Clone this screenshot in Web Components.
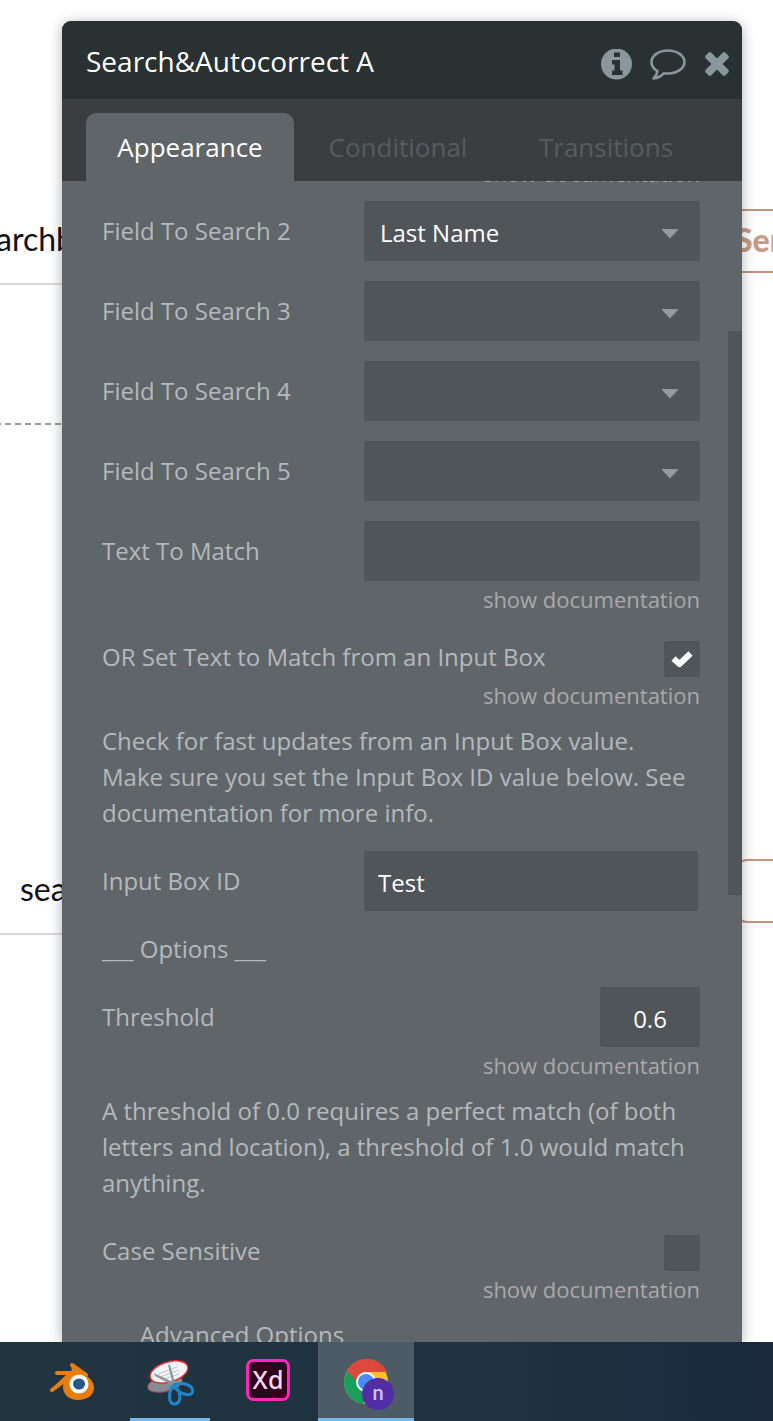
<!DOCTYPE html>
<html lang="en">
<head>
<meta charset="utf-8">
<meta name="viewport" content="width=device-width, initial-scale=1">
<title>Search&amp;Autocorrect A</title>
<style>
    body {
        margin: 0;
        background: #ffffff;
        font-family: "Open Sans", "Noto Sans", sans-serif;
    }
</style>
</head>
<body>
<editor-desktop>
    <page-canvas slot="canvas"></page-canvas>

    <property-editor heading="Search&amp;Autocorrect A">
        <doc-link></doc-link>
        <select-field label="Field To Search 2" value="Last Name"></select-field>
        <select-field label="Field To Search 3"></select-field>
        <select-field label="Field To Search 4"></select-field>
        <select-field label="Field To Search 5"></select-field>
        <text-field label="Text To Match"></text-field>
        <doc-link></doc-link>
        <check-field label="OR Set Text to Match from an Input Box" checked></check-field>
        <doc-link></doc-link>
        <help-text>Check for fast updates from an Input Box value. Make sure you set the Input Box ID value below. See documentation for more info.</help-text>
        <text-field class="static" label="Input Box ID" value="Test"></text-field>
        <help-text>___ Options ___</help-text>
        <text-field class="number" label="Threshold" value="0.6"></text-field>
        <doc-link></doc-link>
        <help-text>A threshold of 0.0 requires a perfect match (of both letters and location), a threshold of 1.0 would match anything.</help-text>
        <check-field label="Case Sensitive"></check-field>
        <doc-link></doc-link>
        <help-text>___ Advanced Options ___</help-text>
    </property-editor>

    <task-bar slot="taskbar">
        <task-item label="Blender">
            <svg width="46" height="36" viewBox="0 0 46 36" overflow="visible">
                <g fill="none" stroke="#e87d0d" stroke-width="4" stroke-linecap="round" stroke-linejoin="round">
                    <path d="M8 11h21M23 3l14 10M3 28l19-14"/>
                </g>
                <path fill="#e87d0d" d="M22 3l14 10c5 3 9 7 9 13 0 7-7 12-16 12s-15-6-15-13c0-2 0-3 1-4L3 30l-1-3 15-14 6-2z"/>
                <circle cx="30" cy="22" r="9.500" fill="#fff"/>
                <ellipse cx="30" cy="22" rx="6" ry="5.500" fill="#265787"/>
            </svg>
        </task-item>
        <task-item label="Snipping Tool" open>
            <svg width="46" height="40" viewBox="0 0 46 40" overflow="visible">
                <ellipse cx="18" cy="24" rx="17.500" ry="7.500" transform="rotate(-12 18 24)" fill="#858b94" stroke="#b64c52"/>
                <ellipse cx="22" cy="12" rx="19.500" ry="10" transform="rotate(-17 22 12)" fill="#f3f4f6" stroke="#e0323a" stroke-width="1.500"/>
                <path d="M11 14l19-7M13 17l19-7M17 19l15-5" stroke="#c3c6ca" fill="none"/>
                <path d="M21 5h2l5.500 19-2.500 1zM7 13l21 10-1 3L8 16z" fill="#8e969e"/>
                <g fill="none" stroke="#1c87cc" stroke-width="3">
                    <path d="M27 25c-5 4-7 19 .5 19s7-13-.5-19z"/>
                    <path d="M27 25c2 8 17 13 18.500 7s-9-11-18.500-7z"/>
                </g>
            </svg>
        </task-item>
        <task-item label="Adobe XD">
            <svg width="44" height="42" viewBox="0 0 44 42">
                <rect x="1.500" y="1.500" width="41" height="39" rx="6" fill="#2e001e" stroke="#ff26be" stroke-width="3"/>
                <text x="22" y="30" text-anchor="middle" font-family="Noto Sans, sans-serif" font-size="25" font-weight="500" fill="#ffd9f2">Xd</text>
            </svg>
        </task-item>
        <task-item label="Chrome" open active>
            <svg width="46" height="42" viewBox="0 0 46 42" overflow="visible">
                <circle cx="23" cy="23" r="22" fill="#fbc02d"/>
                <path d="M23 23L4 12A22 22 0 0 0 20 45l8-14z" fill="#1a9e5c"/>
                <path d="M4 12a22 22 0 0 1 40 1H23a10 10 0 0 0-10 9z" fill="#dc4a3d"/>
                <circle cx="23" cy="23" r="10" fill="#fff"/>
                <circle cx="23" cy="23" r="8" fill="#4b8bf5"/>
                <circle cx="35" cy="35" r="16" fill="#512da8"/>
                <text x="35" y="41" text-anchor="middle" font-family="Roboto, sans-serif" font-size="20" font-weight="500" fill="#d0c3ea">n</text>
            </svg>
        </task-item>
    </task-bar>
</editor-desktop>

<script>
    // Desktop: page canvas at the back, property editor over it, taskbar below
    class EditorDesktop extends HTMLElement {
        constructor() {
            super();
            this.attachShadow({ mode: 'open' });
            this.shadowRoot.innerHTML = `
                <style>
                :host {
                    display: grid;
                    grid-template-rows: minmax(0, 1fr) auto;
                    height: 100vh;
                    overflow: hidden;
                }

                .workspace {
                    display: grid;
                    grid-template: minmax(0, 1fr) / minmax(0, 1fr);
                    overflow: hidden;
                }

                .workspace ::slotted(*) {
                    grid-area: 1 / 1;
                }
                </style>
                <div class="workspace">
                    <slot name="canvas"></slot>
                    <slot></slot>
                </div>
                <slot name="taskbar"></slot>
            `;
        }
    }

    // The edited page, with its elements placed freely
    class PageCanvas extends HTMLElement {
        constructor() {
            super();
            this.attachShadow({ mode: 'open' });
            this.shadowRoot.innerHTML = `
                <style>
                :host {
                    display: block;
                    position: relative;
                    overflow: hidden;
                    font-family: Lato, sans-serif;
                    font-size: 32px;
                    line-height: 40px;
                    color: #111111;
                }

                .input {
                    position: absolute;
                    left: -4px;
                    width: 120px;
                    height: 66px;
                    box-sizing: border-box;
                    border-bottom: 2px solid #d5dadd;
                }

                .group {
                    position: absolute;
                    left: -5px;
                    top: 423px;
                    width: 120px;
                    height: 2px;
                    background: repeating-linear-gradient(90deg, #999999 0 6px, transparent 6px 10px);
                }

                button {
                    position: absolute;
                    right: -60px;
                    height: 64px;
                    box-sizing: border-box;
                    border: 2px solid #c4957f;
                    border-radius: 12px;
                    background: #ffffff;
                    color: #c99a85;
                    font: 900 32px/40px Lato, sans-serif;
                    text-align: left;
                }
                </style>
                <div class="input" style="top: 219px">archb</div>
                <div class="group"></div>
                <div class="input" style="top: 869px; padding-left: 24px">sea</div>
                <button type="button" style="top: 209px; width: 112px; padding: 0 12px 2px">Ser</button>
                <button type="button" style="top: 859px; width: 98px" aria-label="Submit"></button>
            `;
        }
    }

    class PropertyEditor extends HTMLElement {
        constructor() {
            super();
            this.attachShadow({ mode: 'open' });
            this.shadowRoot.innerHTML = `
                <style>
                :host {
                    position: relative;
                    display: flex;
                    flex-direction: column;
                    margin: 21px 31px 0 62px;
                    border-radius: 9px 9px 0 0;
                    box-shadow: 0 2px 14px rgba(0, 0, 0, 0.3);
                    background: #606569;
                    color: #b4b9bc;
                }

                header {
                    display: flex;
                    align-items: center;
                    gap: 18px;
                    height: 78px;
                    padding: 0 12px 0 24px;
                    flex: none;
                    box-sizing: border-box;
                    border-radius: 9px 9px 0 0;
                    background: #293132;
                }

                h1 {
                    flex: 1;
                    margin: 0;
                    padding-top: 2px;
                    font-size: 28px;
                    line-height: 36px;
                    font-weight: 400;
                    color: #ffffff;
                }

                header button {
                    display: flex;
                    margin-top: 8px;
                    padding: 0;
                    border: 0;
                    background: none;
                    color: #8a979d;
                }

                nav {
                    display: flex;
                    flex: none;
                    padding: 14px 32px 0 24px;
                    background: #3a3e41;
                }

                nav button {
                    flex: 1;
                    height: 68px;
                    padding: 0;
                    border: 0;
                    border-radius: 10px 10px 0 0;
                    background: none;
                    font: 400 26px/36px "Open Sans", sans-serif;
                    color: #575c5f;
                }

                nav button[aria-selected="true"] {
                    background: #606569;
                    color: #ffffff;
                }

                .body {
                    position: relative;
                    flex: 1;
                    min-height: 0;
                    overflow: hidden;
                }

                .list {
                    display: flex;
                    flex-direction: column;
                    margin-top: -26px;
                    gap: 20px;
                    padding: 0 42px 0 40px;
                    font-size: 24px;
                    line-height: 36px;
                }

                .thumb {
                    position: absolute;
                    top: 150px;
                    right: 0;
                    width: 14px;
                    height: 564px;
                    background: #505559;
                }
                </style>
                <header>
                    <h1>${this.getAttribute('heading').replace('&', '&amp;')}</h1>
                    <button type="button" aria-label="Info">
                        <svg width="31" height="31" viewBox="0 0 31 31">
                            <circle cx="15.500" cy="15" r="15.500" fill="currentColor"/>
                            <path fill="#293132" d="M13 3.500h6V8h-6zM11 11h8v10.500h2.500V26H11v-4.500h2.500v-6H11z"/>
                        </svg>
                    </button>
                    <button type="button" aria-label="Comments">
                        <svg width="36" height="31" viewBox="0 0 36 31">
                            <path fill="none" stroke="currentColor" stroke-width="2.600" stroke-linejoin="round" d="M7.500 22.200C3.800 20 1.500 16.700 1.500 13 1.500 6.500 8.900 1.500 18 1.500S34.500 6.500 34.500 13 27.100 24.500 18 24.500c-1.500 0-2.800-.1-4-.3C11 27.500 7.500 29.300 3.500 29.500 5.500 27.500 7 25.500 7.500 22.200z"/>
                        </svg>
                    </button>
                    <button type="button" aria-label="Close">
                        <svg width="26" height="26" viewBox="0 0 26 26">
                            <g fill="currentColor" transform="rotate(45 13 13)">
                                <rect x="-1" y="9" width="28" height="8" rx="2"/>
                                <rect x="9" y="-1" width="8" height="28" rx="2"/>
                            </g>
                        </svg>
                    </button>
                </header>
                <nav role="tablist">
                    <button type="button" role="tab" aria-selected="true">Appearance</button>
                    <button type="button" role="tab" aria-selected="false">Conditional</button>
                    <button type="button" role="tab" aria-selected="false">Transitions</button>
                </nav>
                <div class="body">
                    <div class="list"><slot></slot></div>
                    <div class="thumb"></div>
                </div>
            `;
        }
    }

    // Shared look of the property rows
    const fieldStyle = `
        :host {
            display: grid;
            grid-template-columns: 262px minmax(0, 1fr);
            align-items: center;
        }

        input, select {
            width: 100%;
            height: 60px;
            box-sizing: border-box;
            margin: 0;
            padding: 4px 16px 0;
            border: 0;
            border-radius: 2px;
            outline: none;
            appearance: none;
            background: #505559;
            font: 400 24px/36px "Open Sans", sans-serif;
            color: #ffffff;
        }

        input {
            padding-top: 2px;
        }
    `;

    class SelectField extends HTMLElement {
        constructor() {
            super();
            this.attachShadow({ mode: 'open' });
            this.shadowRoot.innerHTML = `
                <style>
                ${fieldStyle}
                .box {
                    display: grid;
                    align-items: center;
                }

                .box > * {
                    grid-area: 1 / 1;
                }

                svg {
                    justify-self: end;
                    margin: 4px 22px 0 0;
                    pointer-events: none;
                }
                </style>
                <label for="field">${this.getAttribute('label')}</label>
                <div class="box">
                    <select id="field"><option>${this.getAttribute('value') || ''}</option></select>
                    <svg width="16" height="9" viewBox="0 0 16 9"><path fill="#95999c" d="M1 0h14q2 0 .5 1.500L9 8.500q-1 1-2 0L.5 1.500Q-1 0 1 0z"/></svg>
                </div>
            `;
        }
    }

    class TextField extends HTMLElement {
        constructor() {
            super();
            this.attachShadow({ mode: 'open' });
            this.shadowRoot.innerHTML = `
                <style>
                ${fieldStyle}
                :host(.static) {
                    padding-right: 2px;
                }

                :host(.static) input {
                    padding-left: 14px;
                }

                :host(.number) input {
                    width: 100px;
                    justify-self: end;
                    text-align: center;
                }
                </style>
                <label for="field">${this.getAttribute('label')}</label>
                <input id="field" type="text" value="${this.getAttribute('value') || ''}">
            `;
        }
    }

    class CheckField extends HTMLElement {
        constructor() {
            super();
            this.attachShadow({ mode: 'open' });
            this.shadowRoot.innerHTML = `
                <style>
                :host {
                    display: flex;
                    justify-content: space-between;
                    padding-top: 14px;
                }

                label {
                    line-height: 32px;
                }

                .box {
                    display: grid;
                    place-items: center;
                }

                .box > * {
                    grid-area: 1 / 1;
                }

                input {
                    width: 36px;
                    height: 36px;
                    margin: 0;
                    border-radius: 2px;
                    appearance: none;
                    background: #505559;
                }

                svg {
                    display: none;
                    pointer-events: none;
                }

                input:checked + svg {
                    display: block;
                }
                </style>
                <label for="field">${this.getAttribute('label')}</label>
                <div class="box">
                    <input id="field" type="checkbox" ${this.hasAttribute('checked') ? 'checked' : ''}>
                    <svg width="22" height="18" viewBox="0 0 22 18"><path fill="none" stroke="#fff" stroke-width="6" stroke-linejoin="round" d="M2.500 8.500l6 5.500L19.500 3.500"/></svg>
                </div>
            `;
        }
    }

    class DocLink extends HTMLElement {
        constructor() {
            super();
            this.attachShadow({ mode: 'open' });
            this.shadowRoot.innerHTML = `
                <style>
                /* sits tight under its field, the list gap does the rest */
                :host {
                    display: block;
                    height: 26px;
                    margin-top: -20px;
                    text-align: right;
                    font-size: 22px;
                    line-height: 36px;
                }

                :host(:first-child) {
                    margin-top: 0;
                }

                a {
                    color: #a9a9a9;
                    text-decoration: none;
                }
                </style>
                <a href="#">show documentation</a>
            `;
        }
    }

    class HelpText extends HTMLElement {
        constructor() {
            super();
            this.attachShadow({ mode: 'open' });
            this.shadowRoot.innerHTML = `
                <style>
                :host {
                    display: block;
                }
                </style>
                <slot></slot>
            `;
        }
    }

    class TaskBar extends HTMLElement {
        constructor() {
            super();
            this.attachShadow({ mode: 'open' });
            this.shadowRoot.innerHTML = `
                <style>
                :host {
                    position: relative;
                    display: flex;
                    gap: 2px;
                    height: 79px;
                    padding-left: 24px;
                    background: linear-gradient(90deg, #203540, #1f3340 60%, #1b2a3f);
                }
                </style>
                <slot></slot>
            `;
        }
    }

    class TaskItem extends HTMLElement {
        constructor() {
            super();
            this.attachShadow({ mode: 'open' });
            this.shadowRoot.innerHTML = `
                <style>
                :host {
                    display: flex;
                    width: 96px;
                }

                button {
                    display: grid;
                    flex: 1;
                    grid-template-rows: 1fr 3px;
                    justify-items: center;
                    align-items: center;
                    padding: 0;
                    border: 0;
                    background: none;
                }

                .line {
                    width: 80px;
                    height: 3px;
                }

                :host([open]) .line {
                    background: #76b9ed;
                }

                :host([active]) button {
                    background: #4c5b65;
                }

                :host([active]) .line {
                    width: 100%;
                }
                </style>
                <button type="button" aria-label="${this.getAttribute('label')}">
                    <slot></slot>
                    <span class="line"></span>
                </button>
            `;
        }
    }

    customElements.define('editor-desktop', EditorDesktop);
    customElements.define('page-canvas', PageCanvas);
    customElements.define('property-editor', PropertyEditor);
    customElements.define('select-field', SelectField);
    customElements.define('text-field', TextField);
    customElements.define('check-field', CheckField);
    customElements.define('doc-link', DocLink);
    customElements.define('help-text', HelpText);
    customElements.define('task-bar', TaskBar);
    customElements.define('task-item', TaskItem);
</script>
</body>
</html>
